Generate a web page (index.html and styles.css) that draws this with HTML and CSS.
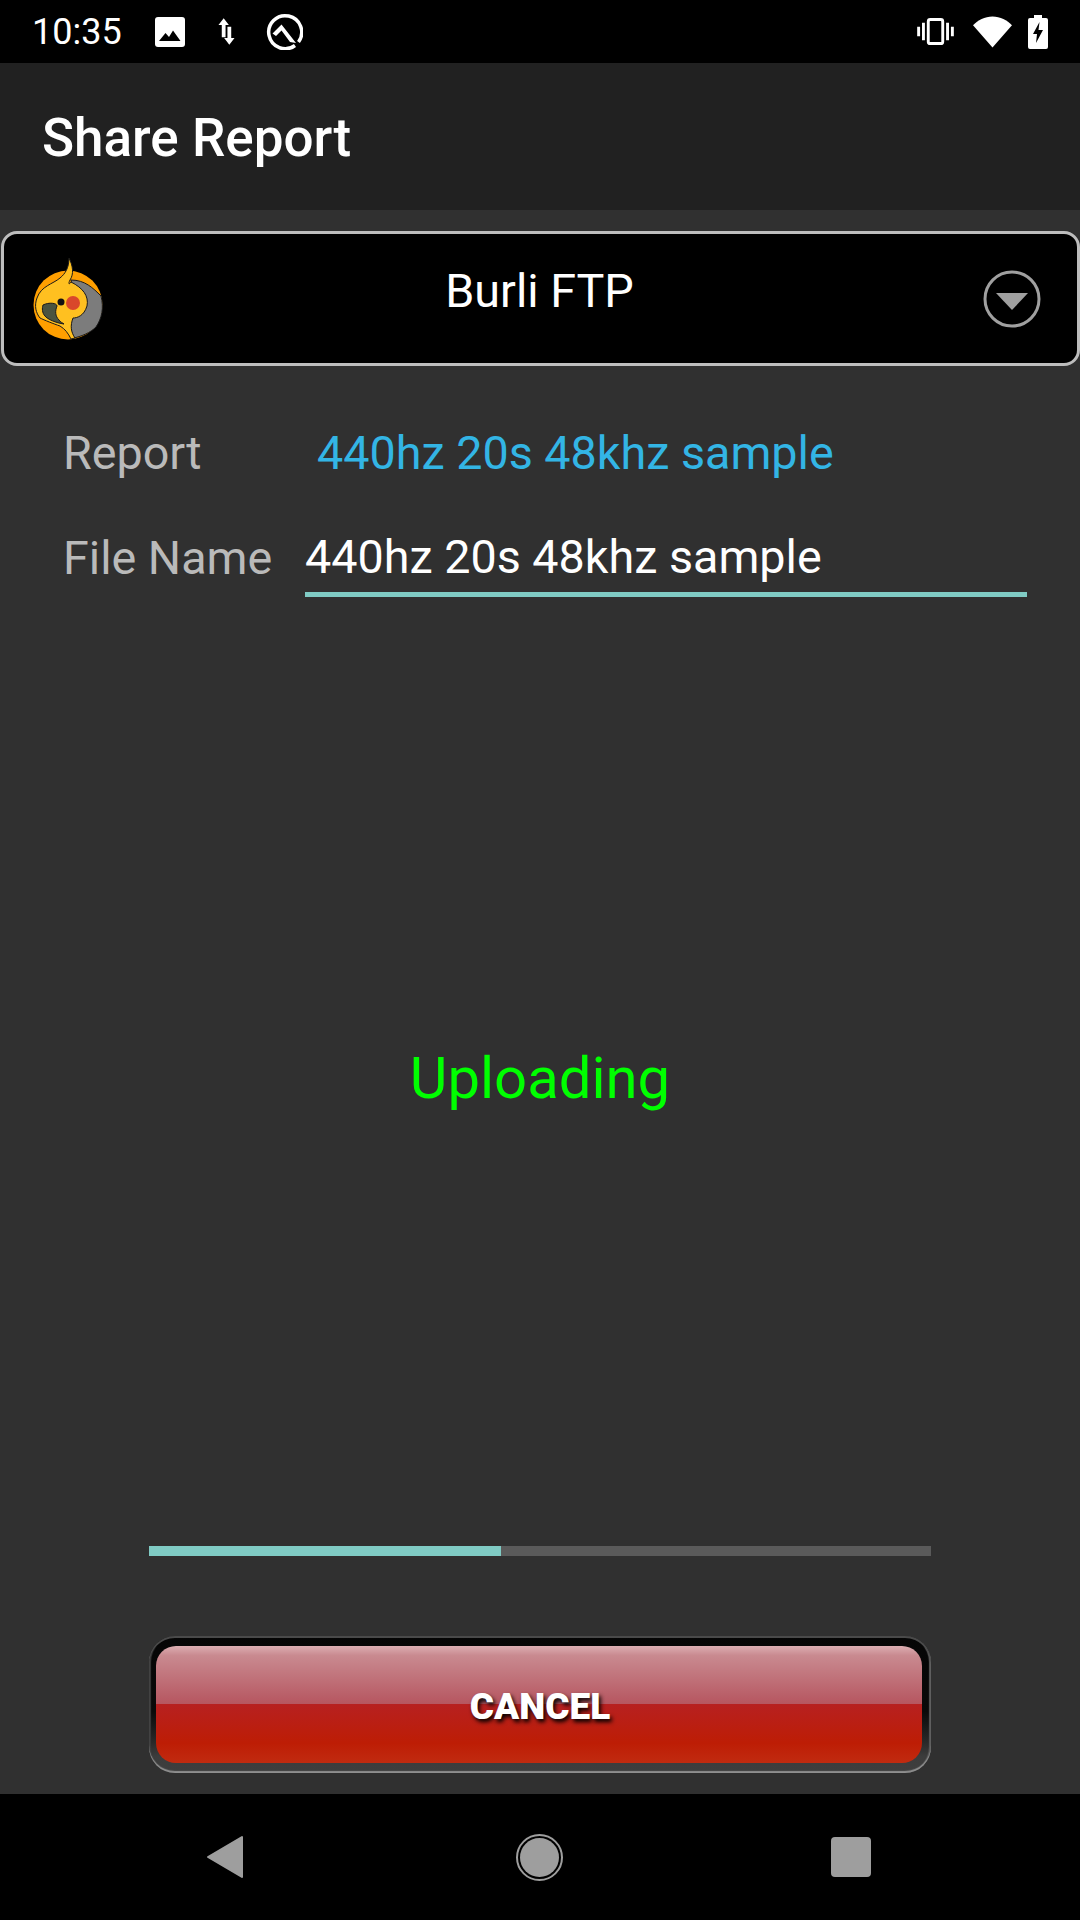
FILE: index.html
```html
<!DOCTYPE html>
<html lang="en">
<head>
    <meta charset="UTF-8">
    <title>Share Report</title>
    <link rel="stylesheet" href="styles.css">
</head>
<body>
    <div class="screen">
        <div class="status-bar">
            <span class="clock">10:35</span>
            <svg class="icon-image" viewBox="0 0 30 30"><path fill="#fff" d="M3 0h24a3 3 0 0 1 3 3v24a3 3 0 0 1-3 3H3a3 3 0 0 1-3-3V3a3 3 0 0 1 3-3z"/><path fill="#000" d="M4 24l6.500-8 3.500 4 4-6.500 7.500 10.500z"/></svg>
            <svg class="icon-data" viewBox="0 0 18 28"><path fill="#fff" d="M6 0l5.500 7H8v13H4V7H.5z"/><path fill="#fff" d="M12 28l-5.500-7H10V9h4v12h3.500z"/></svg>
            <svg class="icon-q" viewBox="0 0 37 37"><path fill="none" stroke="#fff" stroke-width="3.500" d="M29 32.500A16.500 16.500 0 1 1 32.500 29"/><path fill="#fff" d="M6.500 20.500l9-9L30 30l-6-1-8.500-11.500L10 23z"/></svg>
            <span class="status-gap"></span>
            <svg class="icon-vibrate" viewBox="0 0 38 28"><path fill="#fff" d="M0 9h3v10H0zM35 9h3v10h-3zM5 5h3v18H5zM30 5h3v18h-3z"/><rect x="11.500" y="1.500" width="15" height="25" rx="2" fill="none" stroke="#fff" stroke-width="3"/></svg>
            <svg class="icon-wifi" viewBox="0 0 40 32"><path fill="#fff" d="M20 32L0 9C5 4 12 0 20 0s15 4 20 9z"/></svg>
            <svg class="icon-battery" viewBox="0 0 20 34"><path fill="#fff" d="M6 0h8v3h4a2 2 0 0 1 2 2v27a2 2 0 0 1-2 2H2a2 2 0 0 1-2-2V5a2 2 0 0 1 2-2h4z"/><path fill="#000" d="M11.500 7L5 19h4l-1 9 7-13h-4.500z"/></svg>
        </div>

        <div class="toolbar">Share Report</div>

        <div class="content">
            <div class="server-select">
                <svg class="bird-logo" viewBox="0 0 70 82">
                    <circle cx="35" cy="47" r="34.500" fill="#ff9f00"/>
                    <path fill="#7c7c7c" stroke="#1a1a1a" stroke-width="1" d="M38 22c14 0 22 8 30 16 3 12 1 22-5 31-6 6-14 9-22 11-3-6-6-12-4-20 2-12 4-26 1-38z"/>
                    <path fill="#ffc020" stroke="#1a1a1a" stroke-width="1" d="M36 0c4 8 5 16 1 22-2 4-1 5 1 2 12 6 18 14 16 24-3 10-10 12-14 12-3 8-2 14 2 20l-4 1c-3-6-6-10-11-13-6-2-16-6-20-8-4-5-6-12-3-20C8 28 20 26 27 20c5-4 9-10 9-20z"/>
                    <path fill="#4a5440" stroke="#1a1a1a" stroke-width="1" d="M10 47c6-3 14-2 14 1-2 5-2 10 2 14 1 2 4 3 5 4-8-1-17-5-19-8-3-3-3-8-2-11z"/>
                    <circle cx="28" cy="44" r="3.500" fill="#111"/>
                    <circle cx="40" cy="45" r="7" fill="#d9482b"/>
                </svg>
                <div class="server-name">Burli FTP</div>
                <svg class="select-arrow" viewBox="0 0 58 58"><circle cx="29" cy="29" r="27" fill="none" stroke="#a0a0a0" stroke-width="3"/><path fill="#a0a0a0" d="M13 23h32L29 40z"/></svg>
            </div>

            <div class="form">
                <div class="form-row">
                    <span class="form-label">Report</span>
                    <span class="report-name">440hz 20s 48khz sample</span>
                </div>
                <div class="form-row">
                    <span class="form-label">File Name</span>
                    <div class="file-input">440hz 20s 48khz sample</div>
                </div>
            </div>

            <div class="status-text">Uploading</div>

            <div class="progress"><div class="progress-fill" style="width: 45%"></div></div>

            <div class="cancel-wrap">
                <button class="cancel-btn">CANCEL</button>
            </div>
        </div>

        <div class="nav-bar">
            <svg class="nav-back" viewBox="0 0 38 44"><path fill="#9e9e9e" stroke="#9e9e9e" stroke-width="2" stroke-linejoin="round" d="M36 2v40L2 22z"/></svg>
            <div class="nav-home"><div class="nav-home-dot"></div></div>
            <div class="nav-recent"></div>
        </div>
    </div>
</body>
</html>
```

FILE: styles.css
```css
html, body {
    margin: 0;
    padding: 0;
}

body {
    font-family: Roboto, sans-serif;
    background-color: #303030;
}

.screen {
    width: 1080px;
    height: 1920px;
    display: flex;
    flex-direction: column;
    overflow: hidden;
}

.status-bar {
    height: 63px;
    flex: none;
    background: #000;
    display: flex;
    align-items: center;
    padding: 0 32px 0 32px;
    color: #fff;
    box-sizing: border-box;
}

.clock {
    font-size: 36px;
}

.icon-image {
    width: 30px;
    height: 30px;
    margin-left: 33px;
}

.icon-data {
    width: 17px;
    height: 27px;
    margin-left: 33px;
}

.icon-q {
    width: 37px;
    height: 37px;
    margin-left: 31px;
}

.status-gap {
    flex: 1;
}

.icon-vibrate {
    width: 37px;
    height: 27px;
}

.icon-wifi {
    width: 39px;
    height: 32px;
    margin-left: 19px;
}

.icon-battery {
    width: 20px;
    height: 34px;
    margin-left: 16px;
}

.toolbar {
    height: 147px;
    flex: none;
    background: #212121;
    color: #fff;
    font-size: 53px;
    font-weight: 500;
    display: flex;
    align-items: center;
    padding: 3px 0 0 42px;
    box-sizing: border-box;
}

.content {
    flex: 1;
    display: flex;
    flex-direction: column;
    background: #303030;
    padding-top: 21px;
}

.server-select {
    height: 135px;
    margin-left: 1px;
    box-sizing: border-box;
    background: #000;
    border: 3px solid #bdbdbd;
    border-radius: 16px;
    display: flex;
    align-items: center;
    position: relative;
}

.bird-logo {
    width: 70px;
    height: 82px;
    margin-left: 29px;
    flex: none;
}

.server-name {
    position: absolute;
    left: 0;
    right: 2px;
    top: 30px;
    text-align: center;
    color: #fff;
    font-size: 46.700px;
    line-height: 55px;
}

.select-arrow {
    width: 58px;
    height: 58px;
    margin-left: auto;
    margin-right: 36px;
    flex: none;
}

.form {
    padding: 34px 0 0 63px;
}

.form-row {
    display: flex;
    align-items: center;
    height: 105px;
    font-size: 46.700px;
}

.form-label {
    width: 242px;
    color: #bababa;
    flex: none;
}

.report-name {
    color: #33b5e5;
    margin-left: 12px;
}

.file-input {
    width: 722px;
    height: 70px;
    line-height: 60px;
    box-sizing: border-box;
    color: #fff;
    border-bottom: 5px solid #80cbc4;
    margin-top: 9px;
}

.status-text {
    flex: 1;
    display: flex;
    align-items: center;
    justify-content: center;
    color: #00ff00;
    font-size: 58px;
}

.progress {
    width: 782px;
    height: 10px;
    margin: 0 auto;
    background: #5a5a5a;
}

.progress-fill {
    height: 100%;
    background: #80cbc4;
}

.cancel-wrap {
    width: 782px;
    height: 137px;
    box-sizing: border-box;
    margin: 80px auto 21px;
    padding: 10px 9px 10px 7px;
    border-radius: 26px;
    background: linear-gradient(#050505 0%, #0a0a0a 55%, #2a2a2a 78%, #3c3c3c 88%, #3e3e3e 100%);
    box-shadow: inset 0 -2px 1px #8f8f8f, inset 0 2px 0 #4a4a4a, inset 2px 0 1px #3a3a3a, inset -2px 0 1px #5a5a5a;
}

.cancel-btn {
    display: block;
    width: 100%;
    height: 117px;
    border: none;
    padding: 4px 0 0 2px;
    border-radius: 20px;
    font-family: Roboto, sans-serif;
    font-size: 37px;
    font-weight: 900;
    color: #fff;
    text-shadow: 2px 3px 4px #000;
    background: linear-gradient(#dcaeb2 0%, #c98a90 8%, #b65660 49.500%, #b72020 50%, #bd1d05 83%, #c12b10 100%);
}

.nav-bar {
    height: 126px;
    flex: none;
    background: #000;
    display: flex;
    align-items: center;
}

.nav-back {
    width: 38px;
    height: 44px;
    margin-left: 206px;
}

.nav-home {
    width: 47px;
    height: 47px;
    box-sizing: border-box;
    border: 2px solid #9e9e9e;
    border-radius: 50%;
    margin-left: 272px;
    padding: 2px;
}

.nav-home-dot {
    width: 100%;
    height: 100%;
    border-radius: 50%;
    background: #9e9e9e;
}

.nav-recent {
    width: 40px;
    height: 40px;
    border-radius: 4px;
    background: #9e9e9e;
    margin-left: 268px;
}
```
